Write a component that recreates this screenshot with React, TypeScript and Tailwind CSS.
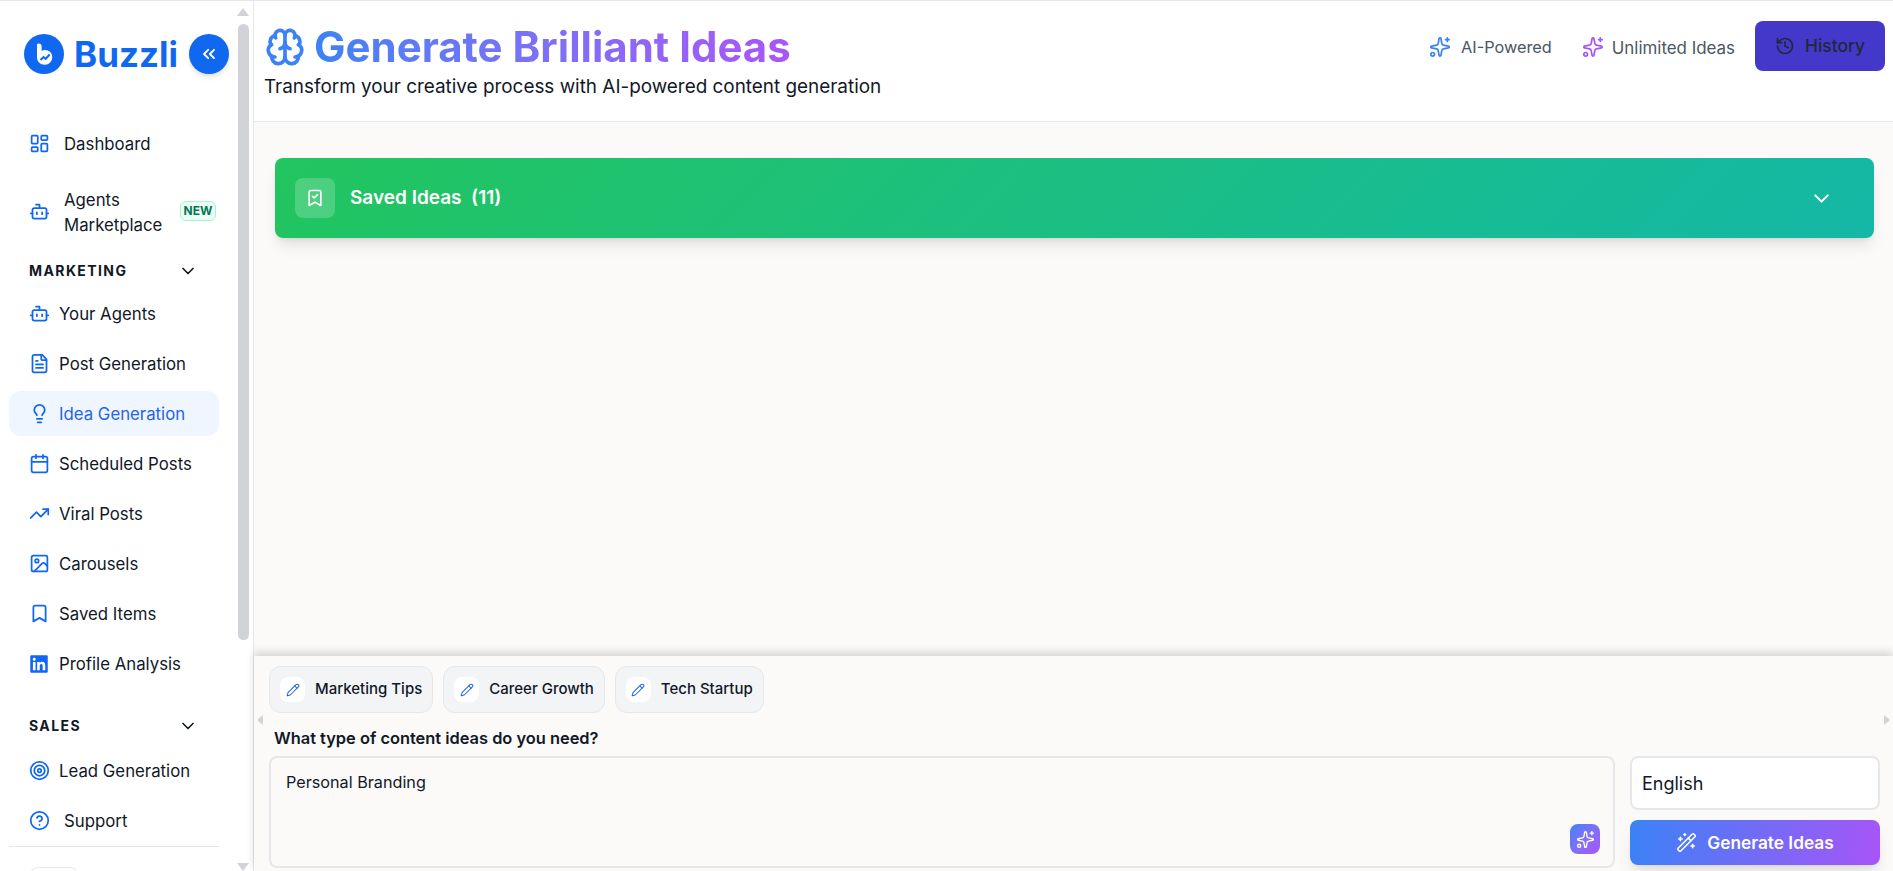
import React from "react";
import {
  LayoutDashboard, Bot, FileText, Lightbulb, Calendar, TrendingUp, Image, Bookmark, Target, CircleHelp,
  ChevronDown, ChevronsLeft, Brain, Sparkles, History, BookmarkCheck, Pencil, WandSparkles,
} from "lucide-react";
import { FaLinkedin } from "react-icons/fa";

const Logo = () => (
  <svg viewBox="0 0 40 40" className="w-10 h-10 shrink-0">
    <circle cx="20" cy="20" r="20" fill="#1068f0" />
    <path d="M13 10c2.200-1.200 4.600-.2 4.600 2.200v4.700c1-.5 2.100-.8 3.400-.8 4.100 0 7.200 3 7.200 7.100 0 4.300-3.200 7.500-7.500 7.500-4.500 0-7.700-3.200-7.700-7.500z" fill="#fff" />
    <path d="M16.500 26l3-3 2.200 1.800 4-4.300" stroke="#1068f0" strokeWidth="2" fill="none" />
  </svg>
);

const Item = ({ icon, label, active, indent }: { icon: React.ReactNode; label: string; active?: boolean; indent?: boolean }) => (
  <div className={`h-[45px] mb-[5px] rounded-xl flex items-center pl-[19px] text-[16.8px] ${active ? "bg-[#eff6ff] text-[#2563eb]" : "text-[#111827]"}`}>
    <span className="w-[22px] flex justify-center text-[#1068f0] shrink-0">{icon}</span>
    <span className={`pt-[3px] ${indent ? "ml-[14px]" : "ml-[9px]"}`}>{label}</span>
  </div>
);

const Section = ({ label }: { label: string }) => (
  <div className="flex items-center justify-between h-[20px] pl-[20px] pr-[21px] text-[#111827]">
    <span className="text-sm font-bold tracking-[0.1em]">{label}</span>
    <ChevronDown size={20} strokeWidth={2} />
  </div>
);

const Chip = ({ label }: { label: string }) => (
  <div className="h-[47px] rounded-xl border border-[#e5e7eb] bg-[#f3f4f6] flex items-center pl-[10px] pr-[10px] gap-[10px] text-[15px] font-medium text-[#111827]">
    <span className="w-[25px] h-[25px] rounded-lg bg-white flex items-center justify-center text-[#2563eb]">
      <Pencil size={14} strokeWidth={1.75} />
    </span>
    {label}
  </div>
);

const ic = { size: 21, strokeWidth: 2 };

export default function App() {
  return (
    <div className="h-[871px] w-full flex flex-col overflow-hidden bg-white font-['Inter',sans-serif] text-[#111827]">
      <div className="h-px bg-[#e5e7eb] shrink-0" />
      <div className="flex flex-1 min-h-0">
        {/* sidebar */}
        <aside className="relative w-[254px] shrink-0 border-r border-[#e5e7eb] bg-white overflow-hidden px-[9px]">
          <div className="flex items-center pt-[33px] pl-[15px]">
            <Logo />
            <span className="ml-[10px] text-[35px] font-bold text-[#1068f0] leading-10">Buzzli</span>
            <span className="ml-[11px] w-10 h-10 rounded-full bg-[#1068f0] text-white flex items-center justify-center shadow-md shrink-0">
              <ChevronsLeft size={20} strokeWidth={2.25} />
            </span>
          </div>
          <div className="mt-[47px] w-[210px]">
            <div className="h-[45px] flex items-center pl-[19px] text-[16.8px]">
              <span className="w-[22px] flex justify-center text-[#1068f0] shrink-0"><LayoutDashboard {...ic} /></span>
              <span className="ml-[14px] pt-[3px]">Dashboard</span>
            </div>
            <div className="flex items-center h-[50px] mt-[22px] pl-[19px] text-[16.8px]">
              <span className="w-[22px] flex justify-center text-[#1068f0] shrink-0 mb-[4px]"><Bot {...ic} /></span>
              <span className="ml-[14px] w-[104px] leading-[25px]">Agents Marketplace</span>
              <span className="ml-[12px] mb-[4px] w-[36px] h-[20px] rounded-md border border-[#a7f3d0] bg-[#ecfdf5] text-[#047857] text-[12px] font-bold flex items-center justify-center">NEW</span>
            </div>
            <div className="mt-[23px] mb-[10px]"><Section label="MARKETING" /></div>
            <Item icon={<Bot {...ic} />} label="Your Agents" />
            <Item icon={<FileText {...ic} />} label="Post Generation" />
            <Item icon={<Lightbulb {...ic} />} label="Idea Generation" active />
            <Item icon={<Calendar {...ic} />} label="Scheduled Posts" />
            <Item icon={<TrendingUp {...ic} />} label="Viral Posts" />
            <Item icon={<Image {...ic} />} label="Carousels" />
            <Item icon={<Bookmark {...ic} />} label="Saved Items" />
            <Item icon={<FaLinkedin size={20} />} label="Profile Analysis" />
            <div className="mt-[30px] mb-[12px]"><Section label="SALES" /></div>
            <Item icon={<Target {...ic} />} label="Lead Generation" />
            <Item icon={<CircleHelp {...ic} />} label="Support" indent />
            <div className="border-t border-[#e5e7eb] mt-[-2px]" />
            <div className="mt-[20px] ml-[21px] w-[48px] h-[30px] rounded-lg border border-[#e5e7eb]" />
          </div>
          {/* scrollbar */}
          <div className="absolute right-[4px] top-[23px] w-[11px] h-[616px] rounded-full bg-[#d1d3d9]" />
          <div className="absolute right-[4px] top-[7px] w-0 h-0 border-x-[6px] border-x-transparent border-b-[8px] border-b-[#d1d3d9]" />
          <div className="absolute right-[4px] bottom-0 w-0 h-0 border-x-[6px] border-x-transparent border-t-[8px] border-t-[#d1d3d9]" />
        </aside>

        {/* main */}
        <main className="relative flex-1 min-w-0 flex flex-col bg-[#fbfaf8]">
          <header className="h-[121px] shrink-0 bg-white border-b border-[#e5e7eb] flex justify-between pl-[11px] pr-[8px]">
            <div className="pt-[24px]">
              <div className="flex items-center gap-[9px]">
                <Brain size={40} strokeWidth={2.2} className="text-[#3b82f6]" />
                <h1 className="text-[42px] leading-[44px] font-bold bg-gradient-to-r from-[#3b82f6] to-[#a855f7] bg-clip-text text-transparent">Generate Brilliant Ideas</h1>
              </div>
              <p className="text-[18.9px] leading-7 mt-[4px] -ml-[1px]">Transform your creative process with AI-powered content generation</p>
            </div>
            <div className="flex items-start pt-[20px]">
              <div className="flex items-center h-[52px] gap-[10px] text-[#4b5563] text-[16.3px]">
                <Sparkles size={22} strokeWidth={1.9} className="text-[#3b82f6]" />
                <span className="pt-[1px]">AI-Powered</span>
              </div>
              <div className="flex items-center h-[52px] gap-[8px] ml-[30px] text-[#4b5563] text-[16.9px]">
                <Sparkles size={22} strokeWidth={1.9} className="text-[#a855f7]" />
                <span className="pt-[3px]">Unlimited Ideas</span>
              </div>
              <div className="ml-[20px] w-[130px] h-[50px] rounded-lg bg-[#4338ca] text-[#1f2937] text-[17.4px] font-medium flex items-center justify-center gap-[10px]">
                <History size={20} strokeWidth={2} />
                History
              </div>
            </div>
          </header>

          <div className="flex-1 min-h-0 pt-[36px] pl-[21px] pr-[19px]">
            <div className="h-[80px] rounded-lg bg-[linear-gradient(135deg,#22c55e,#14b8a6)] shadow-lg flex items-center justify-between pl-[20px] pr-[40px] text-white">
              <div className="flex items-center gap-[15px]">
                <span className="w-10 h-10 rounded-lg bg-white/20 flex items-center justify-center">
                  <BookmarkCheck size={20} strokeWidth={2} />
                </span>
                <span className="text-[19px] font-semibold">Saved Ideas&nbsp; (11)</span>
              </div>
              <ChevronDown size={25} strokeWidth={2} />
            </div>
          </div>

          <div className="h-[215px] shrink-0 shadow-[0_-4px_8px_rgba(0,0,0,0.15)] bg-[#fbfaf8] px-[15px] pt-[10px]">
            <div className="flex gap-[10px]">
              <Chip label="Marketing Tips" />
              <Chip label="Career Growth" />
              <Chip label="Tech Startup" />
            </div>
            <div className="mt-[15px] ml-[5px] text-[16.4px] font-semibold leading-[20px]">What type of content ideas do you need?</div>
            <div className="flex gap-[15px] mt-[8px]">
              <div className="relative flex-1 h-[112px] rounded-lg border-2 border-[#e5e7eb] pl-[15px] pt-[12px] text-[16.2px] leading-6 text-[#111827]">
                Personal Branding
                <span className="absolute right-[13px] bottom-[12px] w-[30px] h-[30px] rounded-lg bg-gradient-to-br from-[#3b82f6] to-[#a855f7] text-white flex items-center justify-center">
                  <Sparkles size={19} strokeWidth={1.75} />
                </span>
              </div>
              <div className="w-[250px] shrink-0 mr-[-2px]">
                <div className="h-[54px] rounded-lg border-2 border-[#e5e7eb] bg-white pl-[10px] pt-[2px] flex items-center text-lg">English</div>
                <div className="mt-[10px] h-[45px] rounded-lg bg-[linear-gradient(100deg,#3b82f6,#a855f7)] text-white font-semibold text-[17.3px] flex items-center justify-center gap-[10px] shadow-lg">
                  <WandSparkles size={21} strokeWidth={1.75} />
                  Generate Ideas
                </div>
              </div>
            </div>
          </div>

          {/* horizontal scrollbar arrows */}
          <div className="absolute left-[3px] top-[714px] w-0 h-0 border-y-[5px] border-y-transparent border-r-[6px] border-r-[#d1d3d9]" />
          <div className="absolute right-[3px] top-[714px] w-0 h-0 border-y-[5px] border-y-transparent border-l-[6px] border-l-[#d1d3d9]" />
        </main>
      </div>
    </div>
  );
}
